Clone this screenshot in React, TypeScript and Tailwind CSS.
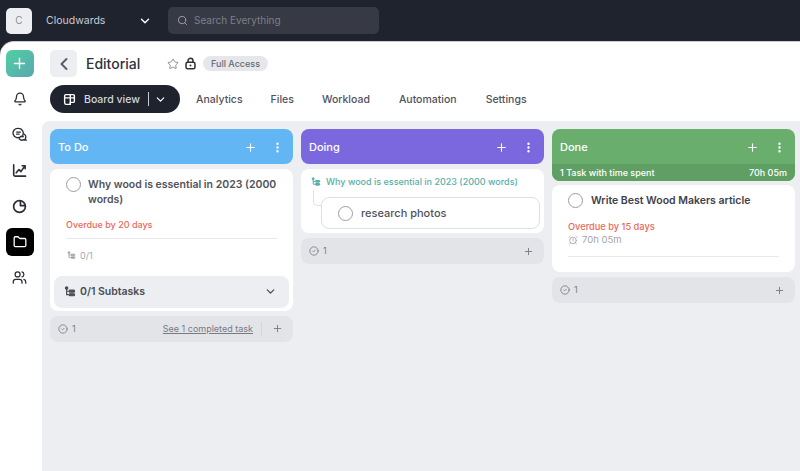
import { Bell, ChevronDown, ChevronLeft, MoreVertical, Plus, Search, Star, Folder, Users, AlarmClock, CircleCheck } from "lucide-react";

function SubtaskIcon({ size = 12, className = "" }: { size?: number; className?: string }) {
  return (
    <svg width={size} height={size} viewBox="0 0 16 16" fill="none" stroke="currentColor" strokeWidth="1.6" className={className}>
      <circle cx="3.5" cy="2.8" r="1.6" fill="currentColor" />
      <path d="M3.5 4v7.5h3M3.5 7h3" />
      <rect x="7" y="5.6" width="7" height="2.6" rx="1" fill="currentColor" />
      <rect x="7" y="10.4" width="7" height="2.6" rx="1" fill="currentColor" />
    </svg>
  );
}

function ChatIcon() {
  return (
    <svg width="15" height="15" viewBox="0 0 16 16" fill="none" stroke="currentColor" strokeWidth="1.4" className="mt-[21px]" strokeLinecap="round">
      <path d="M7 1.5a5 5 0 0 1 4.6 7c-.3.7-.1 1.3.2 1.8-.8.1-1.5-.1-2-.5A5 5 0 1 1 7 1.5Z" />
      <path d="M5 5.4h4M5 7.6h2.5" />
      <path d="M12.8 7.5a3.8 3.8 0 0 1 1.4 5c.1.6.4 1 .8 1.5-.8.1-1.6 0-2.3-.5a4 4 0 0 1-5-1" />
    </svg>
  );
}

function TrendIcon() {
  return (
    <svg width="15" height="15" viewBox="0 0 16 16" fill="none" stroke="currentColor" strokeWidth="1.7" className="mt-[21px]" strokeLinecap="round" strokeLinejoin="round">
      <path d="M1.8 2v10.5a1.5 1.5 0 0 0 1.5 1.5H14.5" />
      <path d="M4.5 10.5 7.5 7l2 2.2L13.5 3.5" />
      <path d="M10.8 3h3.2v3.2" />
    </svg>
  );
}

function PieIcon() {
  return (
    <svg width="15" height="15" viewBox="0 0 16 16" fill="none" stroke="currentColor" strokeWidth="1.8" className="mt-[21px]" strokeLinejoin="round">
      <circle cx="8" cy="8" r="6.3" />
      <path d="M9 1.7V7h5.3" />
    </svg>
  );
}

function LockIcon() {
  return (
    <svg width="13" height="13" viewBox="0 0 16 16" fill="none" stroke="currentColor" strokeWidth="1.9" className="ml-[5px] text-[#2f323b]">
      <rect x="2.5" y="6.5" width="11" height="8" rx="2" />
      <path d="M5 6.5V4.5a3 3 0 0 1 6 0v2" />
      <circle cx="8" cy="10.5" r="1.2" fill="currentColor" stroke="none" />
    </svg>
  );
}

function BoardIcon() {
  return (
    <svg width="13" height="13" viewBox="0 0 16 16" fill="none" stroke="currentColor" strokeWidth="1.7" className="text-white" strokeLinejoin="round">
      <path d="M2 3.5A1.5 1.5 0 0 1 3.5 2h9A1.5 1.5 0 0 1 14 3.5V10a1.5 1.5 0 0 1-1.5 1.5H9V14H4a2 2 0 0 1-2-2Z" />
      <path d="M2 6h12M9 2v12" />
    </svg>
  );
}

function ColumnHeader({ title, color, hours }: { title: string; color: string; hours?: boolean }) {
  return (
    <div className={`rounded-[8px] text-white ${color}`}>
      <div className="flex h-[35px] items-center pl-[8px] pr-[9px] pt-[1px]">
        <span className="flex-1 text-[11px] font-medium">{title}</span>
        <Plus size={13} strokeWidth={2} />
        <MoreVertical size={13} strokeWidth={2.4} className="ml-[14px]" />
      </div>
      {hours && (
        <div className="flex h-[17px] items-center justify-between rounded-b-[8px] bg-[#5f9f63] px-[8px] text-[9px] font-medium">
          <span>1 Task with time spent</span>
          <span>70h 05m</span>
        </div>
      )}
    </div>
  );
}

function ColumnFooter({ link }: { link?: boolean }) {
  return (
    <div className="mt-[5px] flex h-[26px] items-center rounded-[8px] bg-[#e3e4e8] pl-[8px] pr-[10px] text-[9px] text-[#777b84]">
      <CircleCheck size={10} className="mr-[4px]" />
      <span className="flex-1">1</span>
      {link && <span className="mr-[10px] border-r border-[#d3d5da] pr-[8px]"><span className="underline">See 1 completed task</span></span>}
      <Plus size={11} />
    </div>
  );
}

function Radio() {
  return <span className="block h-[15px] w-[15px] shrink-0 rounded-full border border-[#9a9da4] bg-white" />;
}

export default function App() {
  return (
    <div className="flex h-[471px] w-[800px] flex-col overflow-hidden bg-[#1f232e] font-['Inter',sans-serif]">
      <div className="flex h-[41px] shrink-0 items-center">
        <div className="ml-[6px] flex h-[26px] w-[26px] items-center justify-center rounded-[5px] bg-[#eceef1] text-[10px] text-[#8b8e95]">C</div>
        <span className="ml-[14px] w-[92px] text-[10.5px] text-[#c9cbd0]">Cloudwards</span>
        <ChevronDown size={14} strokeWidth={2.4} className="text-white" />
        <div className="ml-[16px] flex h-[27px] w-[211px] items-center rounded-[5px] bg-[#373a44] pl-[9px] text-[10px] text-[#7c7f88]">
          <Search size={11} className="mr-[6px] text-[#a3a5ac]" />
          Search Everything
        </div>
      </div>

      <div className="flex min-h-0 flex-1 rounded-tl-[14px] border-t border-[#c9cbd0] bg-white">
        <div className="flex w-[42px] shrink-0 flex-col items-center pr-[3px] pt-[8px] text-[#2a2d36]">
          <div className="mb-[15px] flex h-[27px] w-[28px] items-center justify-center rounded-[6px] bg-gradient-to-br from-[#4fd0a0] to-[#5aa7b0] text-white">
            <Plus size={17} strokeWidth={2} />
          </div>
          <Bell size={14} strokeWidth={2.2} />
          <ChatIcon />
          <TrendIcon />
          <PieIcon />
          <div className="mt-[14px] flex h-[28px] w-[28px] items-center justify-center rounded-[6px] bg-black text-white">
            <Folder size={14} strokeWidth={2.2} />
          </div>
          <Users size={15} strokeWidth={2} className="mt-[14px]" />
        </div>

        <div className="flex min-w-0 flex-1 flex-col">
          <div className="flex items-center pl-[8px] pt-[8px]">
            <div className="flex h-[27px] w-[27px] items-center justify-center rounded-[5px] bg-[#eceef1] text-[#5a5d66]">
              <ChevronLeft size={20} strokeWidth={2.4} />
            </div>
            <span className="ml-[9px] w-[81px] text-[14px] font-medium text-[#2f323b]">Editorial</span>
            <Star size={12} className="text-[#8b8e95]" />
            <LockIcon />
            <span className="ml-[6px] flex h-[15px] items-center rounded-full bg-[#e6e7eb] px-[8px] text-[9px] font-medium text-[#666a73]">Full Access</span>
          </div>

          <div className="mt-[8px] flex items-center pl-[8px] text-[10.5px] font-medium text-[#50535c]">
            <div className="flex h-[28px] w-[130px] items-center rounded-full bg-[#1f232e] pl-[13px] text-[#d5d6da]">
              <BoardIcon />
              <span className="ml-[8px] pt-[1px]">Board view</span>
              <span className="ml-[8px] h-[14px] w-px bg-[#c9cbd0]" />
              <ChevronDown size={13} strokeWidth={2.2} className="ml-[5px] text-white" />
            </div>
            <span className="ml-[16px] pt-[1px]">Analytics</span>
            <span className="ml-[28px] pt-[1px]">Files</span>
            <span className="ml-[28px] pt-[1px]">Workload</span>
            <span className="ml-[29px] pt-[1px]">Automation</span>
            <span className="ml-[29px] pt-[1px]">Settings</span>
          </div>

          <div className="mt-[8px] flex min-h-0 flex-1 gap-[8px] rounded-tl-[8px] bg-[#eceef1] pl-[8px] pt-[8px]">
            <div className="w-[243px]">
              <ColumnHeader title="To Do" color="bg-[#62b6f3]" />
              <div className="mt-[5px] rounded-[8px] bg-white px-[4px] pb-[3px] pt-[8px]">
                <div className="flex items-start pl-[12px] pr-[8px]">
                  <Radio />
                  <span className="ml-[7px] text-[10.5px] font-semibold leading-[15px] text-[#50535c]">Why wood is essential in 2023 (2000 words)</span>
                </div>
                <div className="mx-[12px] mt-[11px] border-b border-[#e8e9ec] pb-[7px] text-[9px] font-medium leading-[13px] text-[#e8695a]">Overdue by 20 days</div>
                <div className="ml-[13px] mt-[10px] flex items-center text-[9px] text-[#a3a5ac]">
                  <SubtaskIcon size={9} />
                  <span className="ml-[4px]">0/1</span>
                </div>
                <div className="mt-[13px] flex h-[32px] items-center rounded-[8px] bg-[#eceef1] pl-[10px] pr-[12px] text-[#4a4d56]">
                  <SubtaskIcon size={12} />
                  <span className="ml-[4px] flex-1 text-[10.5px] font-semibold">0/1 Subtasks</span>
                  <ChevronDown size={13} strokeWidth={2.4} />
                </div>
              </div>
              <ColumnFooter link />
            </div>

            <div className="w-[243px]">
              <ColumnHeader title="Doing" color="bg-[#7b68de]" />
              <div className="mt-[5px] rounded-[8px] bg-white pb-[4px] pl-[10px] pr-[4px] pt-[6px]">
                <div className="flex h-[14px] items-center text-[9px] font-medium text-[#58aeaa]">
                  <SubtaskIcon size={10} />
                  <span className="ml-[5px]">Why wood is essential in 2023 (2000 words)</span>
                </div>
                <div className="relative ml-[10px] mt-[8px] flex h-[32px] items-center rounded-[8px] border border-[#dfe0e4] pl-[16px]">
                  <span className="absolute -left-[9px] -top-[8px] h-[16px] w-[9px] rounded-bl-[5px] border-b border-l border-[#dfe0e4]" />
                  <Radio />
                  <span className="ml-[8px] text-[11px] font-medium text-[#50535c]">research photos</span>
                </div>
              </div>
              <ColumnFooter />
            </div>

            <div className="w-[243px]">
              <ColumnHeader title="Done" color="bg-[#6aae6e]" hours />
              <div className="mt-[4px] h-[87px] rounded-[8px] bg-white px-[16px] pt-[8px]">
                <div className="flex items-center">
                  <Radio />
                  <span className="ml-[8px] text-[10.5px] font-semibold text-[#3e414a]">Write Best Wood Makers article</span>
                </div>
                <div className="mt-[11px] text-[9.25px] font-medium leading-[13px] text-[#e8695a]">Overdue by 15 days</div>
                <div className="border-b border-[#e8e9ec] pb-[9px] text-[9.5px] leading-[14px] text-[#a3a5ac]">
                  <span className="flex items-center">
                    <AlarmClock size={10} className="mr-[4px]" />
                    70h 05m
                  </span>
                </div>
              </div>
              <ColumnFooter />
            </div>
          </div>
        </div>
      </div>
    </div>
  );
}
